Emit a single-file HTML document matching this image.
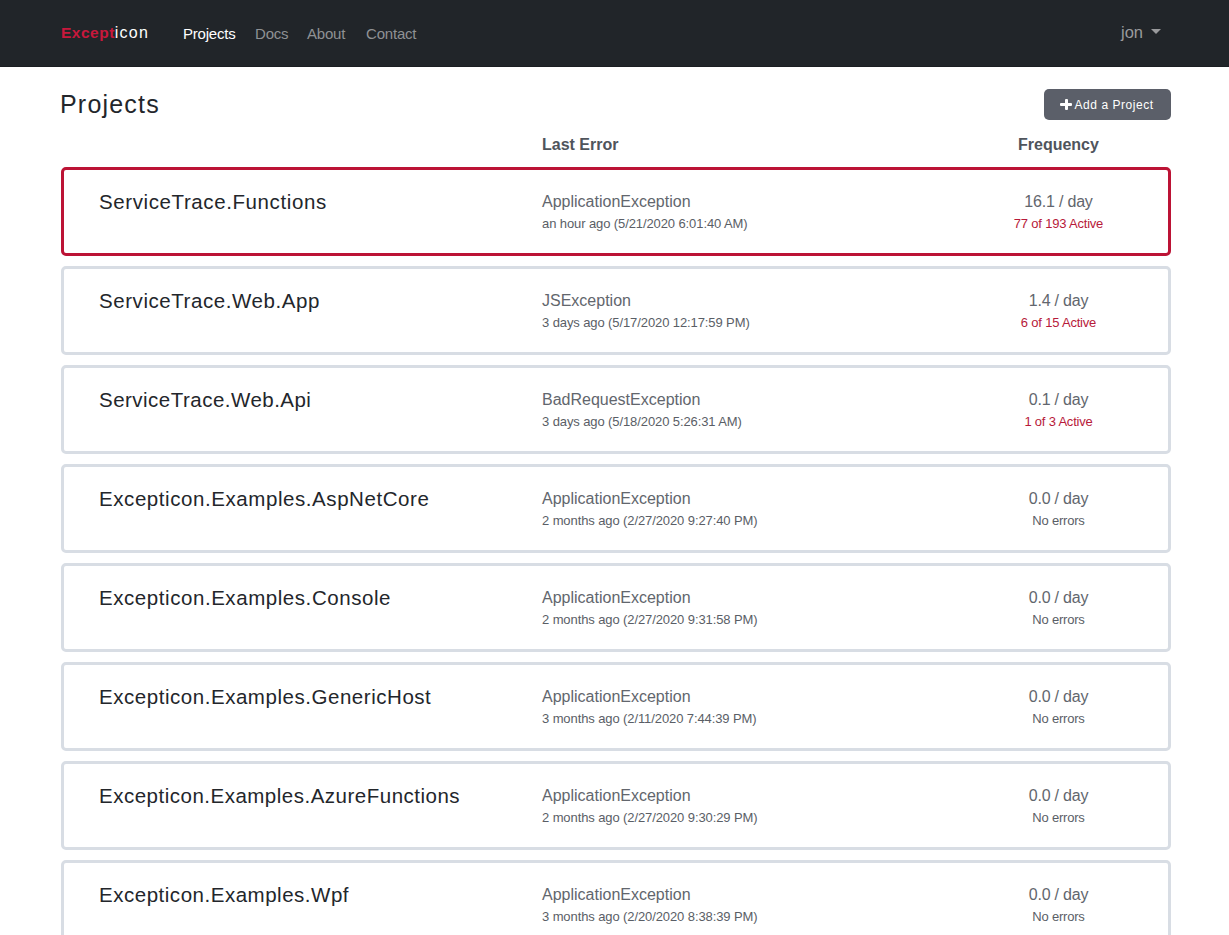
<!DOCTYPE html>
<html>
<head>
<meta charset="utf-8">
<style>
*{box-sizing:border-box;margin:0;padding:0}
html,body{width:1229px;height:935px;overflow:hidden;background:#fff}
body{font-family:"Liberation Sans",sans-serif;color:#555a63;position:relative}
.nav{position:absolute;left:0;top:0;width:1229px;height:67px;background:#212529;border-bottom:1px solid #1b1e22}
.logo{position:absolute;left:61px;top:23px;font-size:16px;line-height:20px;color:#fff;white-space:nowrap}
.logo span{color:#c8183c;font-weight:bold;font-size:15.5px;letter-spacing:0.5px}
.logo i{font-style:normal;letter-spacing:1.2px}
.nl{position:absolute;top:24px;font-size:15px;line-height:20px;color:#8f9194;letter-spacing:-0.2px;white-space:nowrap}
.nl.act{color:#fff}
.user{position:absolute;left:1121px;top:22px;font-size:16.5px;line-height:20px;color:#9a9b9d}
.caret{position:absolute;left:1151px;top:29px;width:0;height:0;border-left:5px solid transparent;border-right:5px solid transparent;border-top:5px solid #999a9c}
h1{position:absolute;left:60px;top:89px;font-size:25px;font-weight:normal;line-height:30px;color:#23262b;letter-spacing:1.2px;white-space:nowrap}
.btn{position:absolute;left:1044px;top:89px;width:127px;height:31px;background:#5b5f69;border-radius:5px;color:#fff;font-size:12px;line-height:31px;white-space:nowrap}
.btn .plus{position:absolute;left:16px;top:10px;width:12px;height:11px}
.btn .plus:before{content:"";position:absolute;left:4.5px;top:0;width:3px;height:11px;background:#fff;border-radius:1px}
.btn .plus:after{content:"";position:absolute;left:0;top:4px;width:12px;height:3px;background:#fff;border-radius:1px}
.btn .t{position:absolute;left:30.5px;top:1px;letter-spacing:0.55px}
.hdr{position:absolute;top:133px;font-size:16px;font-weight:bold;line-height:24px;color:#4f545c;white-space:nowrap}
.card{position:absolute;left:61px;width:1110px;height:89px;border:3px solid #d8dde4;border-radius:5px;background:#fff}
.card.sel{border-color:#bc1335}
.card .title{position:absolute;left:35px;top:20px;font-size:20.5px;line-height:24px;color:#23262b;letter-spacing:0.6px;white-space:nowrap}
.card .exc{position:absolute;left:478px;top:20px;font-size:16px;line-height:24px;color:#62666d;white-space:nowrap}
.card .when{position:absolute;left:478px;top:44px;font-size:13px;line-height:19.5px;color:#5a5e66;letter-spacing:-0.1px;white-space:nowrap}
.card .freq{position:absolute;left:906px;width:177px;top:20px;font-size:16px;line-height:24px;color:#62666d;text-align:center;letter-spacing:-0.2px;white-space:nowrap}
.card .act{position:absolute;left:906px;width:177px;top:44px;font-size:13px;line-height:19.5px;color:#b71a3a;text-align:center;letter-spacing:-0.2px;white-space:nowrap}
.card .act.none{color:#5a5e66}
</style>
</head>
<body>
<div class="nav">
  <div class="logo"><span>Except</span><i>icon</i></div>
  <div class="nl act" style="left:183px">Projects</div>
  <div class="nl" style="left:255px">Docs</div>
  <div class="nl" style="left:307px">About</div>
  <div class="nl" style="left:366px">Contact</div>
  <div class="user">jon</div>
  <div class="caret"></div>
</div>
<h1>Projects</h1>
<div class="btn"><div class="plus"></div><div class="t">Add a Project</div></div>
<div class="hdr" style="left:542px">Last Error</div>
<div class="hdr" style="left:1018px">Frequency</div>

<div class="card sel" style="top:167px">
  <div class="title" style="letter-spacing:0.6px">ServiceTrace.Functions</div>
  <div class="exc">ApplicationException</div>
  <div class="when">an hour ago (5/21/2020 6:01:40 AM)</div>
  <div class="freq">16.1 / day</div>
  <div class="act">77 of 193 Active</div>
</div>
<div class="card" style="top:266px">
  <div class="title" style="letter-spacing:0.56px">ServiceTrace.Web.App</div>
  <div class="exc">JSException</div>
  <div class="when">3 days ago (5/17/2020 12:17:59 PM)</div>
  <div class="freq">1.4 / day</div>
  <div class="act">6 of 15 Active</div>
</div>
<div class="card" style="top:365px">
  <div class="title" style="letter-spacing:0.48px">ServiceTrace.Web.Api</div>
  <div class="exc">BadRequestException</div>
  <div class="when">3 days ago (5/18/2020 5:26:31 AM)</div>
  <div class="freq">0.1 / day</div>
  <div class="act">1 of 3 Active</div>
</div>
<div class="card" style="top:464px">
  <div class="title" style="letter-spacing:0.57px">Excepticon.Examples.AspNetCore</div>
  <div class="exc">ApplicationException</div>
  <div class="when">2 months ago (2/27/2020 9:27:40 PM)</div>
  <div class="freq">0.0 / day</div>
  <div class="act none">No errors</div>
</div>
<div class="card" style="top:563px">
  <div class="title" style="letter-spacing:0.56px">Excepticon.Examples.Console</div>
  <div class="exc">ApplicationException</div>
  <div class="when">2 months ago (2/27/2020 9:31:58 PM)</div>
  <div class="freq">0.0 / day</div>
  <div class="act none">No errors</div>
</div>
<div class="card" style="top:662px">
  <div class="title" style="letter-spacing:0.54px">Excepticon.Examples.GenericHost</div>
  <div class="exc">ApplicationException</div>
  <div class="when">3 months ago (2/11/2020 7:44:39 PM)</div>
  <div class="freq">0.0 / day</div>
  <div class="act none">No errors</div>
</div>
<div class="card" style="top:761px">
  <div class="title" style="letter-spacing:0.5px">Excepticon.Examples.AzureFunctions</div>
  <div class="exc">ApplicationException</div>
  <div class="when">2 months ago (2/27/2020 9:30:29 PM)</div>
  <div class="freq">0.0 / day</div>
  <div class="act none">No errors</div>
</div>
<div class="card" style="top:860px">
  <div class="title" style="letter-spacing:0.52px">Excepticon.Examples.Wpf</div>
  <div class="exc">ApplicationException</div>
  <div class="when">3 months ago (2/20/2020 8:38:39 PM)</div>
  <div class="freq">0.0 / day</div>
  <div class="act none">No errors</div>
</div>
</body>
</html>
